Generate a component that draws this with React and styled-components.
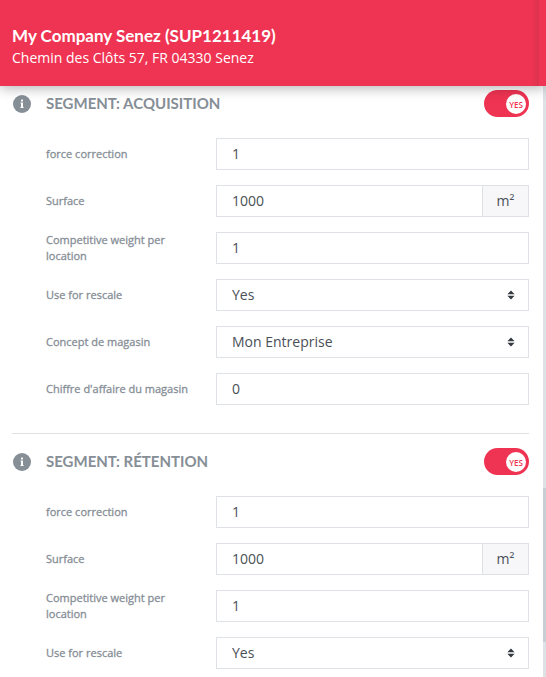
import React, { useState } from 'react'
import styled, { createGlobalStyle } from 'styled-components'

const baseFields = [
  { name: 'force', label: 'force correction', value: '1' },
  { name: 'surface', label: 'Surface', value: '1000', unit: 'm²' },
  { name: 'weight', label: 'Competitive weight per location', value: '1' },
  { name: 'rescale', label: 'Use for rescale', value: 'Yes', options: ['Yes', 'No'] },
]

const storeFields = [
  { name: 'concept', label: 'Concept de magasin', value: 'Mon Entreprise', options: ['Mon Entreprise'] },
  { name: 'turnover', label: "Chiffre d'affaire du magasin", value: '0' },
]

function InfoIcon() {
  return (
    <svg width='18' height='18' viewBox='0 0 18 18' aria-hidden='true'>
      <circle cx='9' cy='9' r='9' fill='#868e96' />
      <rect x='8' y='4.5' width='2' height='2' rx='0.5' fill='#fff' />
      <path d='M7.5 7.5H10v4.6h.6v.9H7.4v-.9H8V8.4h-.5z' fill='#fff' />
    </svg>
  )
}

function Carets() {
  return (
    <svg width='8' height='10' viewBox='0 0 8 10' aria-hidden='true'>
      <path d='M4 0.5L7.6 4.2H0.4zM4 9.5L0.4 5.8h7.2z' fill='#343a40' />
    </svg>
  )
}

function Field({ id, field }) {
  return (
    <Row>
      <Label htmlFor={id}>{field.label}</Label>
      {field.options ? (
        <SelectBox>
          <Select id={id} defaultValue={field.value}>
            {field.options.map((option) => (
              <option key={option}>{option}</option>
            ))}
          </Select>
          <Carets />
        </SelectBox>
      ) : (
        <InputGroup>
          <Input id={id} type='text' defaultValue={field.value} />
          {field.unit && <Unit>{field.unit}</Unit>}
        </InputGroup>
      )}
    </Row>
  )
}

function Segment({ id, title, fields }) {
  const [active, setActive] = useState(true)

  return (
    <Section>
      <SectionHead>
        <InfoIcon />
        <SectionTitle>{title}</SectionTitle>
        <Switch $on={active}>
          <input
            type='checkbox'
            aria-label={title}
            checked={active}
            onChange={() => setActive(!active)}
          />
          <Knob>{active ? 'YES' : 'NO'}</Knob>
        </Switch>
      </SectionHead>
      <Fields>
        {fields.map((field) => (
          <Field key={field.name} id={`${id}-${field.name}`} field={field} />
        ))}
      </Fields>
    </Section>
  )
}

function App() {
  return (
    <Page>
      <GlobalStyle />
      <Header>
        <HeaderText>
          <Title>My Company Senez (SUP1211419)</Title>
          <Address>Chemin des Clôts 57, FR 04330 Senez</Address>
        </HeaderText>
      </Header>
      <Body>
        <Segment
          id='acquisition'
          title='SEGMENT: ACQUISITION'
          fields={[...baseFields, ...storeFields]}
        />
        <Segment id='retention' title='SEGMENT: RÉTENTION' fields={baseFields} />
        <Track>
          <Thumb />
        </Track>
      </Body>
    </Page>
  )
}

export default App

const GlobalStyle = createGlobalStyle`
* {
  box-sizing: border-box;
}
body {
  margin: 0;
  background: #fff;
  font-family: 'Open Sans', sans-serif;
}`

const Page = styled.div`
display:flex;
flex-direction:column;
height:100vh;
overflow:hidden;`

const Header = styled.header`
display:flex;
flex-shrink:0;
position:relative;
z-index:1;
padding-right:7px;
background:#ef3352;
color:#fff;
box-shadow:0 2px 12px rgba(0, 0, 0, 0.3);`

const HeaderText = styled.div`
flex:1;
padding:24px 12px 17px;
background:linear-gradient(to left, #dc3350, #ef3352 8px);`

const Title = styled.h1`
margin:0;
font-family:Lato, sans-serif;
font-size:17px;
font-weight:700;
line-height:23px;`

const Address = styled.p`
margin:0;
font-size:14px;
line-height:22px;`

const Body = styled.main`
position:relative;
flex:1;
min-height:0;
overflow:hidden;
padding:4px 17px 0 12px;`

const Section = styled.section`
padding-bottom:28px;

& + & {
  border-top:1px solid #dfe1e3;
  padding-top:14px;
}`

const SectionHead = styled.div`
display:flex;
align-items:center;
padding-left:1px;`

const SectionTitle = styled.h2`
flex:1;
margin:0 0 0 15px;
padding-bottom:2px;
color:#868e96;
font-family:Lato, sans-serif;
font-size:15px;
font-weight:700;
line-height:20px;`

const Switch = styled.label`
display:flex;
align-items:center;
justify-content:${(props) => (props.$on ? 'flex-end' : 'flex-start')};
position:relative;
width:45px;
height:27px;
padding:0 3px;
border-radius:14px;
background:${(props) => (props.$on ? '#ef3352' : '#adb5bd')};
cursor:pointer;

input {
  position:absolute;
  inset:0;
  margin:0;
  opacity:0;
}`

const Knob = styled.span`
width:20px;
height:20px;
border-radius:50%;
background:#fff;
color:#ef3352;
font-size:8px;
font-weight:600;
line-height:22px;
text-align:center;`

const Fields = styled.div`
display:flex;
flex-direction:column;
gap:15px;
padding:21px 0 0 34px;`

const Row = styled.div`
display:grid;
grid-template-columns:170px minmax(0, 1fr);
align-items:center;
height:32px;`

const Label = styled.label`
padding-right:20px;
color:#868e96;
font-size:11px;
font-weight:500;
line-height:16px;
-webkit-text-stroke:0.3px #868e96;`

const InputGroup = styled.div`
display:flex;
height:32px;`

const Input = styled.input`
flex:1;
min-width:0;
padding:0 15px 1px;
border:1px solid #dee2e6;
border-radius:0;
background:#fff;
color:#495057;
font-family:inherit;
font-size:14px;`

const Unit = styled.span`
width:46px;
border:1px solid #dee2e6;
border-left:0;
background:#f7f7fa;
color:#495057;
font-size:14px;
line-height:30px;
text-align:center;`

const SelectBox = styled.div`
position:relative;
height:32px;

svg {
  position:absolute;
  top:11px;
  right:14px;
  pointer-events:none;
}`

const Select = styled.select`
appearance:none;
width:100%;
height:100%;
padding:0 30px 1px 15px;
border:1px solid #dee2e6;
border-radius:0;
background:#fff;
color:#495057;
font-family:inherit;
font-size:14px;`

const Track = styled.div`
position:absolute;
top:0;
right:0;
bottom:0;
width:3px;
background:#dee2e6;`

const Thumb = styled.div`
position:absolute;
top:68%;
right:0;
width:3px;
height:26%;
background:#c8ced3;`
